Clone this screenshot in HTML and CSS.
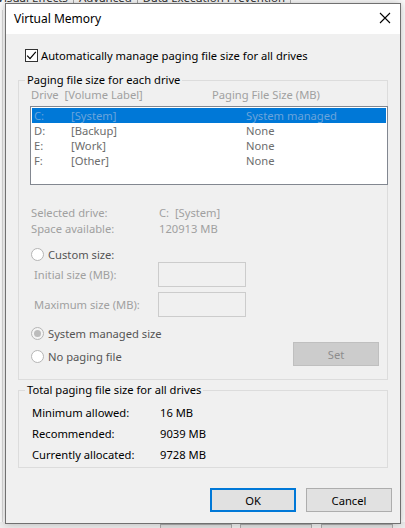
FILE: index.html
```html
<!DOCTYPE html>
<html>
<head>
<meta charset="utf-8">
<link rel="stylesheet" href="styles.css">
</head>
<body>
<div class="desktop">
  <div class="parent-tabs">
    <span class="ptab pt1">Visual Effects</span>
    <span class="ptab pt2">Advanced</span>
    <span class="ptab pt3">Data Execution Prevention</span>
  </div>
  <div class="parent-line"></div>
  <div class="parent-buttons">
    <span class="pbtn pbtn1"></span>
    <span class="pbtn pbtn2"></span>
    <span class="pbtn pbtn3"></span>
  </div>

  <div class="dialog">
    <div class="titlebar">
      <span class="title">Virtual Memory</span>
      <svg class="close" width="12" height="12" viewBox="0 0 12 12"><path d="M1 1 L11 11 M11 1 L1 11" stroke="#000" stroke-width="1.1" fill="none"/></svg>
    </div>
    <div class="body">
      <label class="auto">
        <span class="checkbox"><svg width="11" height="11" viewBox="0 0 11 11"><path d="M1.2 5.6 L4 8.6 L9.8 1.8" stroke="#000" stroke-width="1.2" fill="none"/></svg></span>
        <span>Automatically manage paging file size for all drives</span>
      </label>

      <fieldset class="group group1">
        <legend>Paging file size for each drive</legend>
        <div class="inner1">
          <div class="colhead disabled">
            <span class="c1">Drive&nbsp; [Volume Label]</span>
            <span class="c3">Paging File Size (MB)</span>
          </div>
          <div class="listbox">
            <div class="row sel"><span class="c1">C:</span><span class="c2">[System]</span><span class="c3">System managed</span></div>
            <div class="row"><span class="c1">D:</span><span class="c2">[Backup]</span><span class="c3">None</span></div>
            <div class="row"><span class="c1">E:</span><span class="c2">[Work]</span><span class="c3">None</span></div>
            <div class="row"><span class="c1">F:</span><span class="c2">[Other]</span><span class="c3">None</span></div>
          </div>

          <div class="info disabled">
            <span>Selected drive:</span><span>C:&nbsp; [System]</span>
            <span>Space available:</span><span>120913 MB</span>
          </div>

          <div class="radio r-custom"><span class="rb"></span><span>Custom size:</span></div>
          <div class="field f-initial"><span class="disabled">Initial size (MB):</span><span class="input"></span></div>
          <div class="field f-max"><span class="disabled">Maximum size (MB):</span><span class="input"></span></div>

          <div class="bottomrow">
            <div class="radios">
              <div class="radio"><span class="rb on"></span><span>System managed size</span></div>
              <div class="radio r-none"><span class="rb"></span><span>No paging file</span></div>
            </div>
            <span class="btn setbtn">Set</span>
          </div>
        </div>
      </fieldset>

      <fieldset class="group group2">
        <legend>Total paging file size for all drives</legend>
        <div class="totals">
          <span>Minimum allowed:</span><span>16 MB</span>
          <span>Recommended:</span><span>9039 MB</span>
          <span>Currently allocated:</span><span>9728 MB</span>
        </div>
      </fieldset>

      <div class="actions">
        <span class="btn okbtn">OK</span>
        <span class="btn">Cancel</span>
      </div>
    </div>
  </div>
</div>
</body>
</html>
```
FILE: styles.css
```css
* { box-sizing: border-box; }
html, body { margin: 0; padding: 0; }
body {
  width: 405px;
  height: 528px;
  overflow: hidden;
  font-family: "Noto Sans", "Open Sans", sans-serif;
  font-size: 11.2px;
  color: #000;
  background: #fbfbfb;
}
.desktop {
  position: relative;
  width: 405px;
  height: 528px;
  overflow: hidden;
  background: #fbfbfb;
}
.parent-tabs {
  display: flex;
  margin-top: -8px;
  margin-left: -3px;
  height: 14px;
  font-size: 11.5px;
  line-height: 12px;
  color: #333;
  white-space: nowrap;
}
.ptab {
  border-right: 1px solid #aaa;
  padding-right: 5px;
}
.pt2, .pt3 { padding-left: 5px; }
.parent-line {
  position: absolute;
  left: 2px;
  top: 10px;
  width: 1px;
  height: 518px;
  background: #d9d9d9;
}
.parent-buttons {
  position: absolute;
  left: 0;
  top: 522px;
  width: 405px;
  height: 6px;
  background: #eeeeee;
}
.pbtn {
  position: absolute;
  top: 2px;
  height: 6px;
  width: 72px;
  background: #e1e1e1;
  border: 1px solid #adadad;
}
.pbtn1 { left: 160px; }
.pbtn2 { left: 240px; }
.pbtn3 { left: 321px; }

.dialog {
  position: absolute;
  left: 5px;
  top: 3px;
  width: 396px;
  height: 521px;
  border: 1px solid #707070;
  background: #f0f0f0;
  box-shadow: 0 0 8px rgba(0,0,0,0.25);
  display: flex;
  flex-direction: column;
}
.titlebar {
  height: 30px;
  background: #fff;
  display: flex;
  align-items: center;
  justify-content: space-between;
  padding: 0 9px 0 8px;
  flex-shrink: 0;
}
.title {
  font-size: 12px;
  color: #000;
  margin-top: -2px;
}
.close { margin-top: -2px; }

.body {
  padding: 0 12px;
  display: flex;
  flex-direction: column;
}
.auto {
  display: flex;
  align-items: center;
  gap: 3px;
  margin: 15px 0 0 7px;
  height: 13px;
}
.checkbox {
  width: 13px;
  height: 13px;
  border: 1px solid #333;
  background: #fff;
  display: flex;
  align-items: center;
  justify-content: center;
}
.checkbox svg { display: block; }

.group {
  margin: 0;
  border: 1px solid #dcdcdc;
  padding: 0;
  min-width: 0;
}
.group legend {
  padding: 0 2px;
  margin-left: 6px;
  line-height: 14px;
  color: #000;
}
.group1 {
  margin-top: 11px;
  height: 307px;
}
.inner1 { padding: 0 0 0 11px; }
.disabled { color: #a0a0a0; }

.colhead {
  display: flex;
  height: 15px;
  line-height: 15px;
  margin-left: 1px;
}
.colhead .c1 { width: 181px; }

.listbox {
  margin: 4px -1px 0 0;
  height: 79px;
  border: 1px solid #828790;
  background: #fff;
  padding: 1px;
  color: #6d6d6d;
}
.row {
  display: flex;
  height: 15px;
  line-height: 15px;
  padding-left: 2px;
}
.row .c1 { width: 37px; }
.row .c2 { width: 175px; }
.row.sel {
  background: #0078d7;
  color: #6aa4db;
}

.info {
  display: grid;
  grid-template-columns: 128px auto;
  line-height: 16px;
  margin-top: 20px;
  margin-left: 1px;
}

.radio {
  display: flex;
  align-items: center;
  gap: 4px;
  height: 14px;
  color: #555;
}
.r-custom { margin-top: 10px; margin-left: 1px; }
.rb {
  width: 13px;
  height: 13px;
  border-radius: 50%;
  border: 1px solid #b5b5b5;
  background: #fff;
  display: inline-flex;
  align-items: center;
  justify-content: center;
}
.rb.on::after {
  content: "";
  width: 7px;
  height: 7px;
  border-radius: 50%;
  background: #bcbcbc;
}
.rb.on { background: #f4f4f4; }

.field {
  display: flex;
  align-items: center;
  margin-left: 4px;
  height: 25px;
}
.field .disabled { width: 124px; }
.f-initial { margin-top: 1px; }
.f-max { margin-top: 5px; }
.input {
  width: 88px;
  height: 25px;
  border: 1px solid #cccccc;
  background: #f0f0f0;
}

.bottomrow {
  display: flex;
  justify-content: space-between;
  align-items: flex-end;
  margin-top: 9px;
  margin-right: 8px;
}
.radios { display: flex; flex-direction: column; margin-left: 1px; }
.r-none { margin-top: 9px; }

.btn {
  display: flex;
  align-items: center;
  justify-content: center;
  width: 86px;
  height: 24px;
  background: #e1e1e1;
  border: 1px solid #adadad;
  color: #000;
}
.setbtn {
  background: #cccccc;
  border-color: #bfbfbf;
  color: #8d8d8d;
  margin-bottom: -3px;
}

.group2 {
  margin-top: 3px;
  height: 85px;
}
.totals {
  display: grid;
  grid-template-columns: 128px auto;
  row-gap: 5px;
  line-height: 16px;
  padding: 8px 0 0 13px;
}

.actions {
  display: flex;
  justify-content: flex-end;
  gap: 10px;
  margin-top: 20px;
  margin-right: -4px;
}
.okbtn {
  border: 2px solid #0078d7;
}
```
